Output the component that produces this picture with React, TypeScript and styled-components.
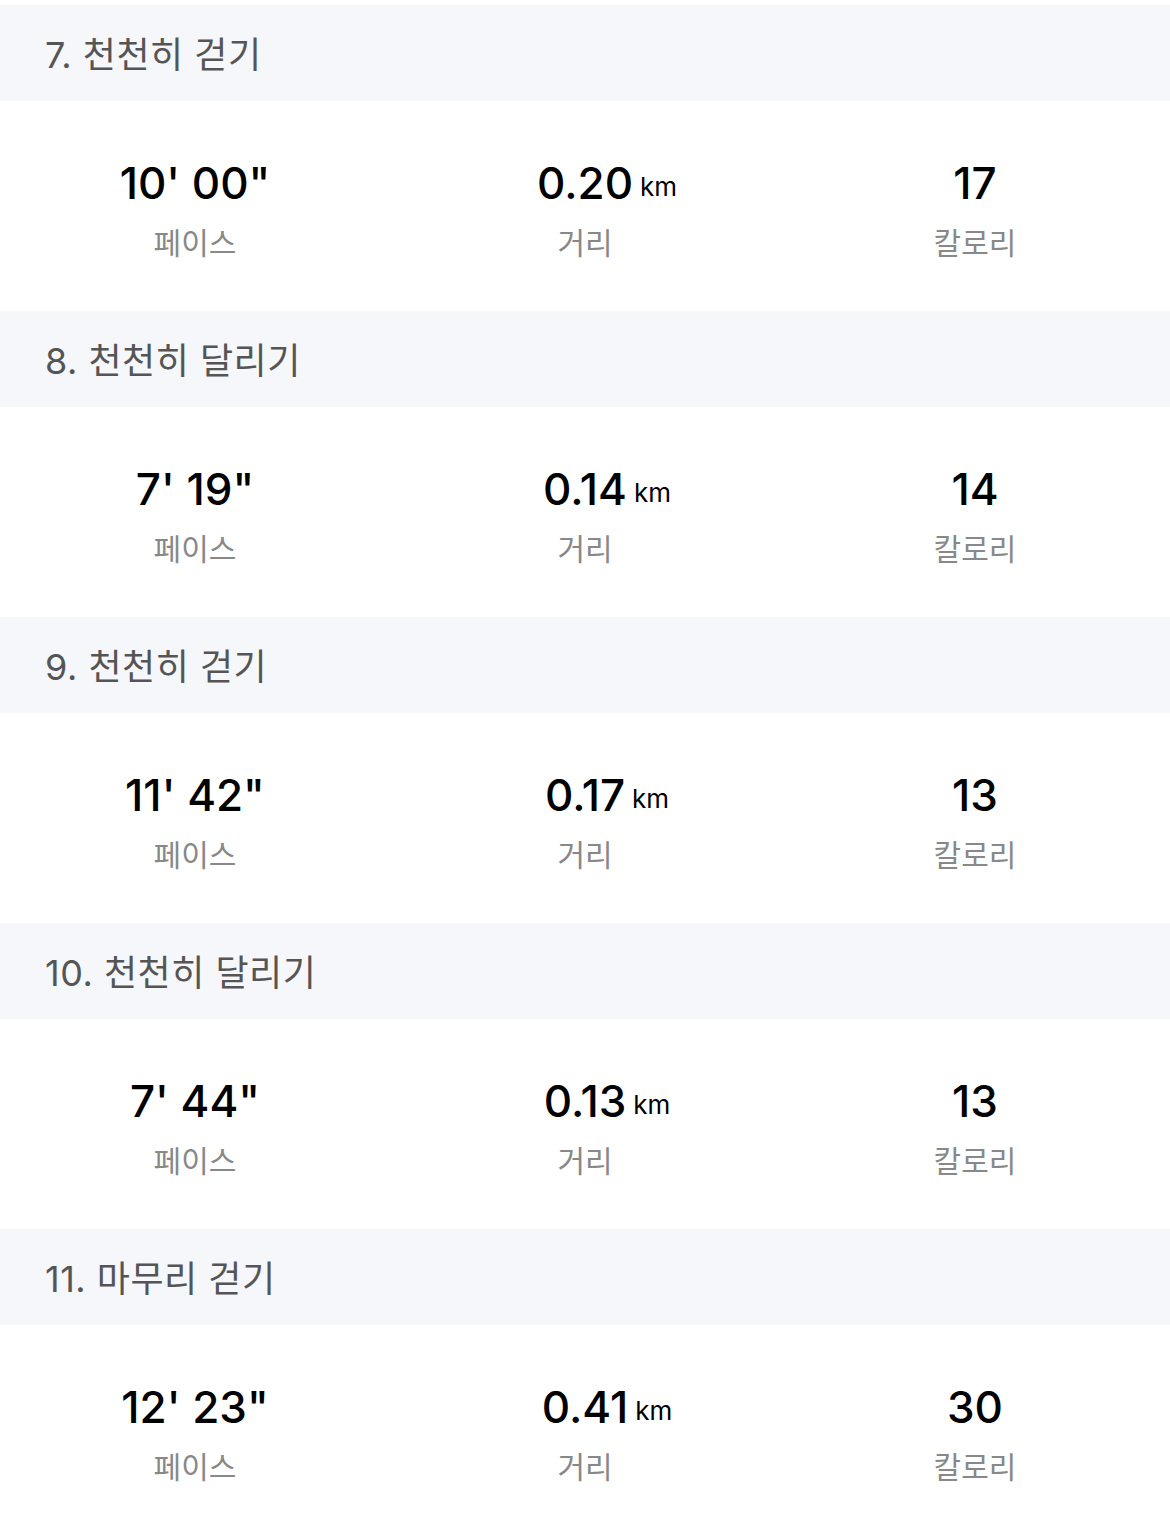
import React from "react";
import styled, { createGlobalStyle } from "styled-components";

const Global = createGlobalStyle`
  html, body { margin: 0; padding: 0; background: #ffffff; }
  body { font-family: Inter, "Noto Sans CJK KR", sans-serif; }
`;

const Page = styled.div`
  padding-top: 5px;
  width: 1170px;
`;

const Section = styled.section`
  display: flex;
  flex-direction: column;
`;

const Header = styled.div`
  height: 96px;
  background: #f6f7fa;
  display: flex;
  align-items: center;
  padding-left: 45px;
  padding-bottom: 2px;
  box-sizing: border-box;
  font-family: Inter, "Noto Sans CJK KR", sans-serif;
  font-size: 36px;
  color: #555555;
  letter-spacing: 0.5px;
`;

const StatsRow = styled.div`
  height: 210px;
  display: grid;
  grid-template-columns: repeat(3, 1fr);
  align-items: center;
`;

const Stat = styled.div`
  display: flex;
  flex-direction: column;
  align-items: center;
  gap: 12px;
  padding-top: 6px;
`;

const Value = styled.div`
  position: relative;
  font-family: Inter, "Noto Sans CJK KR", sans-serif;
  font-weight: 500;
  font-size: 44px;
  line-height: 52px;
  color: #000000;
`;

const Unit = styled.span`
  position: absolute;
  left: 100%;
  bottom: 0;
  margin-left: 7px;
  font-size: 26px;
  line-height: 44px;
  font-weight: 400;
  white-space: nowrap;
`;

const Label = styled.div`
  font-family: "Noto Sans CJK KR", sans-serif;
  font-size: 30px;
  line-height: 40px;
  color: #888888;
`;

const laps = [
  { title: "7. 천천히 걷기", pace: "10' 00\"", dist: "0.20", cal: "17" },
  { title: "8. 천천히 달리기", pace: "7' 19\"", dist: "0.14", cal: "14" },
  { title: "9. 천천히 걷기", pace: "11' 42\"", dist: "0.17", cal: "13" },
  { title: "10. 천천히 달리기", pace: "7' 44\"", dist: "0.13", cal: "13" },
  { title: "11. 마무리 걷기", pace: "12' 23\"", dist: "0.41", cal: "30" },
];

export default function App() {
  return (
    <Page>
      <Global />
      {laps.map((l) => (
        <Section key={l.title}>
          <Header>{l.title}</Header>
          <StatsRow>
            <Stat>
              <Value>{l.pace}</Value>
              <Label>페이스</Label>
            </Stat>
            <Stat>
              <Value>
                {l.dist}
                <Unit>km</Unit>
              </Value>
              <Label>거리</Label>
            </Stat>
            <Stat>
              <Value>{l.cal}</Value>
              <Label>칼로리</Label>
            </Stat>
          </StatsRow>
        </Section>
      ))}
    </Page>
  );
}
